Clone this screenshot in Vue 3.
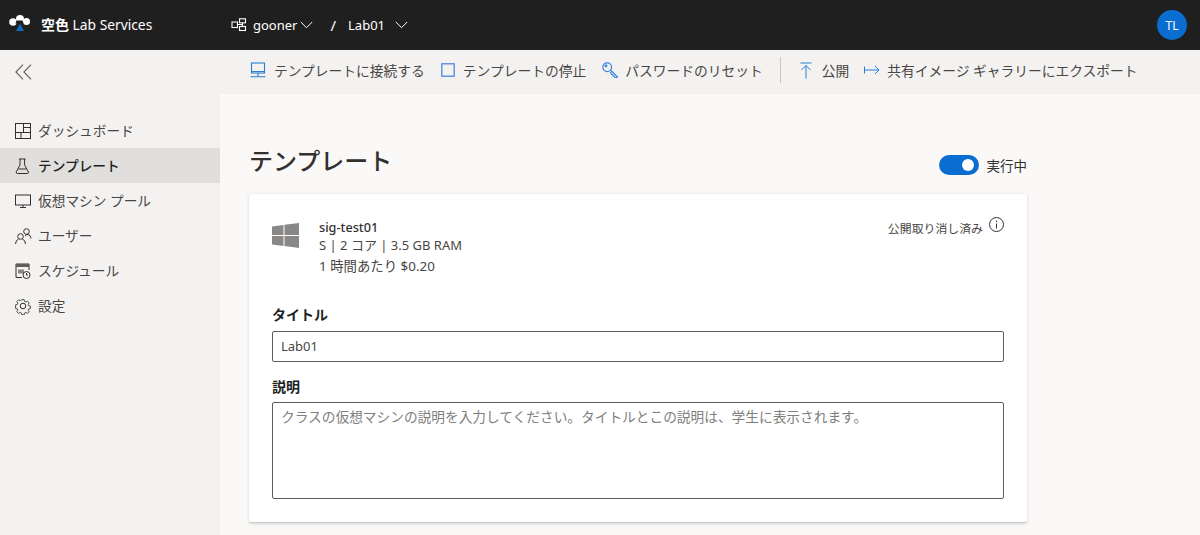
<script setup>
const nav = [
  { label: 'ダッシュボード', icon: 'dash' },
  { label: 'テンプレート', icon: 'flask', active: true },
  { label: '仮想マシン プール', icon: 'monitor' },
  { label: 'ユーザー', icon: 'users' },
  { label: 'スケジュール', icon: 'cal' },
  { label: '設定', icon: 'gear' },
]
</script>

<template>
  <div class="app">
    <header class="top">
      <div class="brand">
        <svg class="logo" width="21" height="16" viewBox="0 0 21 16">
          <circle cx="4" cy="7" r="3.8" fill="#fff" />
          <circle cx="11" cy="4" r="4" fill="#fff" />
          <circle cx="17.5" cy="6.5" r="3.5" fill="#fff" />
          <path d="M7.5 5.500h6l1 3h-8z" fill="#1f1f1f" />
          <path d="M11 8.500 7 16h8z" fill="#0f6cbd" />
        </svg>
        <span class="brand-name"><b>空色</b> Lab Services</span>
      </div>
      <div class="crumbs">
        <svg class="org" width="16" height="14" viewBox="0 0 16 14" fill="none" stroke="#fff" stroke-width="1.1">
          <rect x="1" y="4" width="5.500" height="5.500" />
          <rect x="8.500" y=".8" width="6" height="4" />
          <rect x="8.500" y="8.500" width="6" height="4" />
          <path d="M6.500 6.500h5M11.500 5v3.500" />
        </svg>
        <span class="crumb">gooner</span>
        <svg class="chev" width="13" height="8" viewBox="0 0 13 8" fill="none" stroke="#fff" stroke-width="1"><path d="M.8 1l5.700 5.700L12.200 1" /></svg>
        <span class="slash">/</span>
        <span class="crumb">Lab01</span>
        <svg class="chev chev2" width="13" height="8" viewBox="0 0 13 8" fill="none" stroke="#fff" stroke-width="1"><path d="M.8 1l5.700 5.700L12.200 1" /></svg>
      </div>
      <div class="avatar">TL</div>
    </header>

    <div class="cmdbar">
      <div class="collapse">
        <svg width="17" height="16" viewBox="0 0 17 16" fill="none" stroke="#605e5c" stroke-width="1.100"><path d="M8 .6.9 8 8 15.400M16 .6 8.900 8 16 15.400" /></svg>
      </div>
      <div class="cmds">
        <div class="cmd">
          <svg width="16" height="16" viewBox="0 0 16 16" fill="none" stroke="#2b7cd3" stroke-width="1.100"><rect x="1.500" y="1" width="13" height="10" /><path d="M8 11v3M.5 14.800h15M1.500 9.500h13" /></svg>
          <span>テンプレートに接続する</span>
        </div>
        <div class="cmd stop">
          <svg width="14" height="14" viewBox="0 0 14 14" fill="none" stroke="#3f7fd6" stroke-width="1.200"><rect x=".8" y=".8" width="12.400" height="12.400" /></svg>
          <span>テンプレートの停止</span>
        </div>
        <div class="cmd key">
          <svg width="16" height="16" viewBox="0 0 16 16" fill="none" stroke="#3d86dc" stroke-width="1.200"><circle cx="5.200" cy="5.200" r="4.400" /><circle cx="4" cy="3.800" r=".9" /><path d="M8.500 8 15.300 14.800v.7h-2.300l-.8-1.300-1.200-.3-.3-1.300-1.300-.4-.2-1.200-1.200-.8" /></svg>
          <span>パスワードのリセット</span>
        </div>
        <div class="sep"></div>
        <div class="cmd pub">
          <svg width="12" height="17" viewBox="0 0 12 17" fill="none" stroke="#2b7cd3" stroke-width="1"><path d="M.5 1h11M6 16.500V3.500M1.500 8 6 3.500 10.500 8" /></svg>
          <span>公開</span>
        </div>
        <div class="cmd exp">
          <svg width="16" height="10" viewBox="0 0 16 10" fill="none" stroke="#2b7cd3" stroke-width="1"><path d="M.5 1.500v7M.5 5h14.500M11 1l4 4-4 4" /></svg>
          <span>共有イメージ ギャラリーにエクスポート</span>
        </div>
      </div>
    </div>

    <div class="body">
      <aside class="side">
        <div v-for="n in nav" :key="n.label" class="nav" :class="{ active: n.active }">
          <svg width="18" height="18" viewBox="0 0 18 18" fill="none" stroke="#323130" stroke-width="1">
            <template v-if="n.icon === 'dash'">
              <rect x="1.500" y="1.500" width="15" height="15" /><path d="M9.500 1.500V10M1.500 10.500h15M9.500 5.500h7M7 10.500v6" />
            </template>
            <template v-else-if="n.icon === 'flask'">
              <path d="M5 2h6.600M6 2v6L2.300 14.800q-.7 1.700 1 1.700h10q1.700 0 1-1.700L10.600 8V2M4.500 12h7.600" />
            </template>
            <template v-else-if="n.icon === 'monitor'">
              <rect x="1.500" y="3" width="15" height="10" /><path d="M9 13v2M6 15.500h6" />
            </template>
            <template v-else-if="n.icon === 'users'">
              <circle cx="6.500" cy="9.500" r="2.800" /><circle cx="12.500" cy="4.500" r="2.800" /><path d="M1.500 17q.3-4.300 3-4.800M8.500 12.200q2.500.5 3 4.800M11 9q1-1.500 3-1.500 2.500 0 3 4" />
            </template>
            <template v-else-if="n.icon === 'cal'">
              <path d="M8 15.500H2V2h13v6" /><path d="M2 2h13v3H2z" fill="#605e5c" stroke="none" /><path d="M4 7.500h6v4H4z" fill="#8a8886" stroke="none" /><circle cx="12.500" cy="13" r="3.500" fill="#f3f2f1" /><path d="M12.500 11v2h1.500" />
            </template>
            <template v-else>
              <circle cx="9" cy="9" r="2.800" /><path d="M7.600 1.500h2.800l.4 2.100 1.500.7 1.900-1.100 2 2-1.100 1.900.6 1.500 2 .5v2.800l-2 .5-.6 1.500 1.100 1.800-2 2-1.900-1.100-1.500.7-.4 2.100H7.600l-.4-2.100-1.500-.7-1.900 1.100-2-2 1.100-1.800-.6-1.500-2-.5V7.600l2-.5.6-1.500-1.100-1.900 2-2 1.900 1.100 1.500-.7z" transform="translate(1.350 1.350) scale(.85)" />
            </template>
          </svg>
          <span>{{ n.label }}</span>
        </div>
      </aside>

      <main class="main">
        <div class="title-row">
          <h1>テンプレート</h1>
          <div class="state">
            <span class="toggle"><i></i></span>
            <span>実行中</span>
          </div>
        </div>
        <section class="card">
          <div class="vm">
            <svg class="win" width="27" height="25" viewBox="0 0 27 25" fill="#8a8886">
              <path d="M0 3.600 11.500 2v10H0zM12.500 1.800 27 0v12H12.500zM0 13h11.500v10L0 21.500zM12.500 13H27v12l-14.500-1.900z" />
            </svg>
            <div class="vm-text">
              <div class="vm-name">sig-test01</div>
              <div class="vm-spec">S | 2 コア | 3.5 GB RAM</div>
              <div class="vm-price">1 時間あたり $0.20</div>
            </div>
            <div class="pubstate">
              <span>公開取り消し済み</span>
              <svg width="15" height="15" viewBox="0 0 15 15" fill="none" stroke="#323130" stroke-width="1"><circle cx="7.500" cy="7.500" r="7" /><path d="M7.500 6.500v5M7.500 3.500v1.500" /></svg>
            </div>
          </div>
          <label class="lbl first">タイトル</label>
          <div class="input">Lab01</div>
          <label class="lbl second">説明</label>
          <div class="textarea">クラスの仮想マシンの説明を入力してください。タイトルとこの説明は、学生に表示されます。</div>
        </section>
      </main>
    </div>
  </div>
</template>

<style>
html, body { margin: 0; padding: 0; background: #faf9f8; }
</style>

<style scoped>
.app {
  width: 1200px;
  height: 535px;
  overflow: hidden;
  display: flex;
  flex-direction: column;
  font-family: "Noto Sans", "Noto Sans CJK JP", sans-serif;
  font-size: 14px;
  color: #323130;
  background: #faf9f8;
}
.top {
  flex: none;
  height: 50px;
  background: #1f1f1f;
  color: #fff;
  display: flex;
  align-items: center;
  box-sizing: border-box;
  padding: 0 13px 0 9px;
}
.brand { width: 222px; display: flex; align-items: center; }
.logo { margin-right: 11px; margin-top: -4px; }
.brand-name { font-size: 13.8px; margin-top: -2px; }
.brand-name b { font-weight: 600; font-size: 14px; }
.crumbs { flex: 1; display: flex; align-items: center; font-size: 13px; }
.org { margin-right: 6px; }
.chev { margin-left: 3px; margin-bottom: 1px; }
.chev2 { margin-left: 10px; }
.slash { margin: 0 12px 0 17px; font-size: 15px; }
.avatar {
  width: 30px;
  height: 30px;
  border-radius: 50%;
  background: #0a6ed1;
  font-size: 12px;
  display: flex;
  align-items: center;
  justify-content: center;
}
.cmdbar {
  flex: none;
  height: 44px;
  background: #f3f2f1;
  display: flex;
  align-items: center;
}
.collapse { width: 250px; box-sizing: border-box; padding-left: 15px; display: flex; margin-bottom: 1px; }
.cmds { display: flex; align-items: center; color: #484644; font-size: 13.75px; margin-bottom: 4px; }
.cmd { display: flex; align-items: center; gap: 8px; white-space: nowrap; }
.stop { margin-left: 16px; }
.key { margin-left: 16px; gap: 7px; }
.sep { width: 1px; height: 26px; background: #c8c6c4; margin: 0 19px 0 17px; }
.pub { gap: 10px; }
.exp { margin-left: 15px; gap: 7px; }
.body { flex: 1; display: flex; min-height: 0; }
.side {
  width: 220px;
  flex: none;
  background: #f3f2f1;
  padding-top: 19px;
  box-sizing: border-box;
}
.nav {
  height: 35px;
  display: flex;
  align-items: center;
  gap: 6px;
  padding-left: 14px;
  color: #484644;
  font-size: 13.7px;
}
.nav span { margin-bottom: 2px; }
.nav.active { background: #e1dfdd; color: #201f1e; font-weight: 500; }
.main { flex: 1; padding: 0 173px 0 29px; min-width: 0; }
.title-row {
  height: 100px;
  display: flex;
  justify-content: space-between;
  align-items: flex-end;
  box-sizing: border-box;
  padding-bottom: 18px;
}
h1 { margin: 0 0 -3px; font-size: 24px; line-height: 36px; font-weight: 500; color: #323130; }
.state { display: flex; align-items: center; gap: 8px; font-size: 13.5px; height: 20px; margin-bottom: 1px; }
.toggle {
  width: 40px;
  height: 20px;
  border-radius: 10px;
  background: #0a6ed1;
  position: relative;
  display: block;
}
.toggle i {
  position: absolute;
  right: 5px;
  top: 4px;
  width: 12px;
  height: 12px;
  border-radius: 50%;
  background: #fff;
}
.card {
  width: 778px;
  height: 328px;
  box-sizing: border-box;
  background: #fff;
  border-radius: 2px;
  box-shadow: 0 1.6px 3.6px rgba(0,0,0,.13), 0 .3px .9px rgba(0,0,0,.11);
  padding: 24px 23px;
}
.vm { display: flex; align-items: flex-start; font-size: 13px; height: 69px; color: #484644; }
.win { margin: 5px 20px 0 0; flex: none; }
.vm-text { line-height: 19px; flex: 1; }
.vm-name { font-weight: 500; font-size: 12.7px; color: #323130; }
.vm-spec { margin-top: -1px; }
.vm-price { margin-top: 2px; font-size: 13.4px; }
.pubstate { display: flex; align-items: flex-start; gap: 6px; font-size: 11.9px; line-height: 18px; color: #484644; padding-top: 1px; }
.pubstate svg { margin-top: -2px; }
.lbl { display: block; font-weight: 600; color: #201f1e; font-size: 14px; line-height: 20px; }
.first { margin-top: 18px; }
.second { margin-top: 15px; }
.input, .textarea {
  box-sizing: border-box;
  border: 1px solid #605e5c;
  border-radius: 2px;
  background: #fff;
}
.input { height: 31px; margin-top: 6px; line-height: 29px; padding-left: 8px; font-size: 13px; color: #484644; }
.textarea { height: 97px; margin-top: 5px; padding: 4px 8px; font-size: 13.7px; line-height: 20px; color: #807e7c; }
</style>
